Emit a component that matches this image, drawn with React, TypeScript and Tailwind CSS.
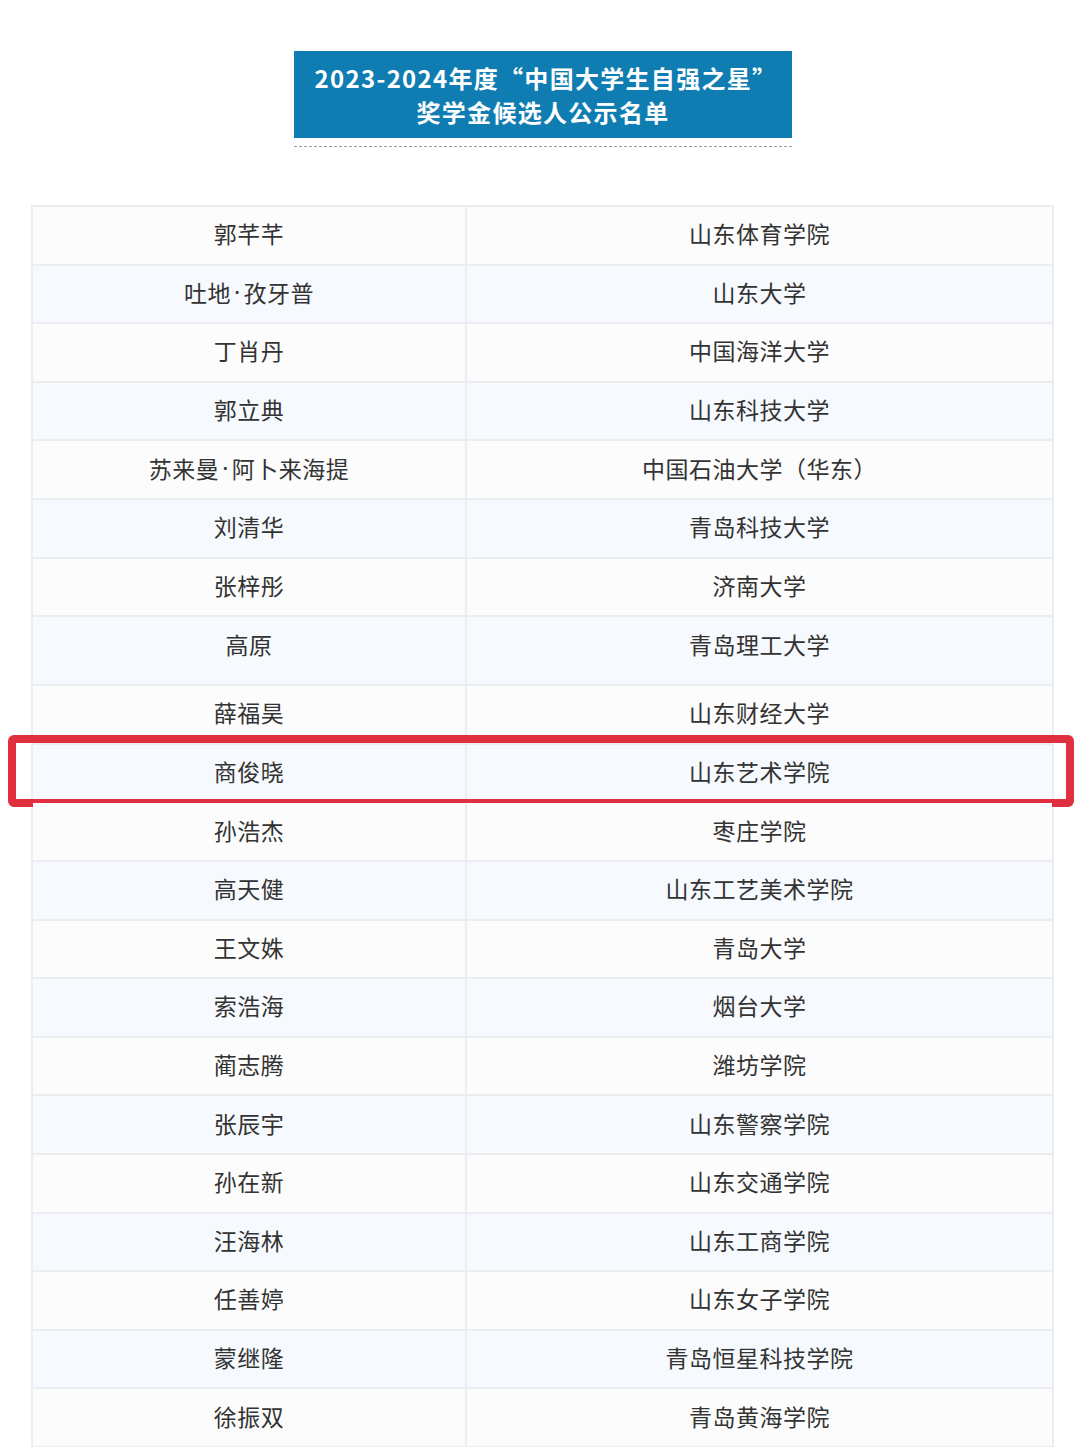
const rows: [string, string][] = [
  ["郭芊芊", "山东体育学院"],
  ["吐地·孜牙普", "山东大学"],
  ["丁肖丹", "中国海洋大学"],
  ["郭立典", "山东科技大学"],
  ["苏来曼·阿卜来海提", "中国石油大学（华东）"],
  ["刘清华", "青岛科技大学"],
  ["张梓彤", "济南大学"],
  ["高原", "青岛理工大学"],
  ["薛福昊", "山东财经大学"],
  ["商俊晓", "山东艺术学院"],
  ["孙浩杰", "枣庄学院"],
  ["高天健", "山东工艺美术学院"],
  ["王文姝", "青岛大学"],
  ["索浩海", "烟台大学"],
  ["蔺志腾", "潍坊学院"],
  ["张辰宇", "山东警察学院"],
  ["孙在新", "山东交通学院"],
  ["汪海林", "山东工商学院"],
  ["任善婷", "山东女子学院"],
  ["蒙继隆", "青岛恒星科技学院"],
  ["徐振双", "青岛黄海学院"],
];

// names with a middle dot: render the dot in a latin font so it stays narrow
function Name({ text }: { text: string }) {
  const parts = text.split("·");
  if (parts.length === 1) return <>{text}</>;
  return (
    <>
      {parts[0]}
      <span className="mx-[3px]" style={{ fontFamily: '"Noto Sans", sans-serif' }}>
        ·
      </span>
      {parts[1]}
    </>
  );
}

export default function App() {
  return (
    <div
      className="min-h-screen bg-white flex flex-col items-center"
      style={{ fontFamily: '"Noto Sans CJK SC", "Noto Sans", sans-serif' }}
    >
      {/* Title banner */}
      <div className="mt-[51px] ml-[6px] w-[498px] h-[87px] bg-[#0f7db1] flex flex-col items-center justify-center text-white font-bold text-[24px] leading-[34px] tracking-[1.3px]">
        <p className="ml-[6px]">2023-2024年度“中国大学生自强之星”</p>
        <p>奖学金候选人公示名单</p>
      </div>
      <div className="mt-[8px] ml-[6px] w-[498px] border-t border-dashed border-[#9a9a9a]" />

      {/* List */}
      <div className="mt-[58px] w-[1023px] self-start ml-[31px] border-t-2 border-l-2 border-r-2 border-[#ebedf0] text-[#333] text-[23px] leading-none tracking-[0.5px]">
        {rows.map(([name, school], i) => (
          <div
            key={name}
            className={`relative flex border-b-2 border-[#ebedf0] ${
              i % 2 === 1 ? "bg-[#f6f9fd]" : "bg-[#fcfcfc]"
            } ${name === "高原" ? "h-[69px]" : "h-[58.6px]"}`}
          >
            <div
              className={`w-[434px] flex items-center justify-center border-r-2 border-[#ebedf0] ${
                name === "高原" ? "pb-[13px]" : "pb-[3px]"
              }`}
            >
              <Name text={name} />
            </div>
            <div
              className={`flex-1 flex items-center justify-center ${
                name === "高原" ? "pb-[13px]" : "pb-[3px]"
              }`}
            >
              {school}
            </div>
            {name === "商俊晓" && (
              <div className="absolute -top-[10px] -bottom-[6px] -left-[25px] -right-[22px] border-[8px] border-[#e0303f] rounded-[6px] pointer-events-none" />
            )}
          </div>
        ))}
      </div>
    </div>
  );
}
